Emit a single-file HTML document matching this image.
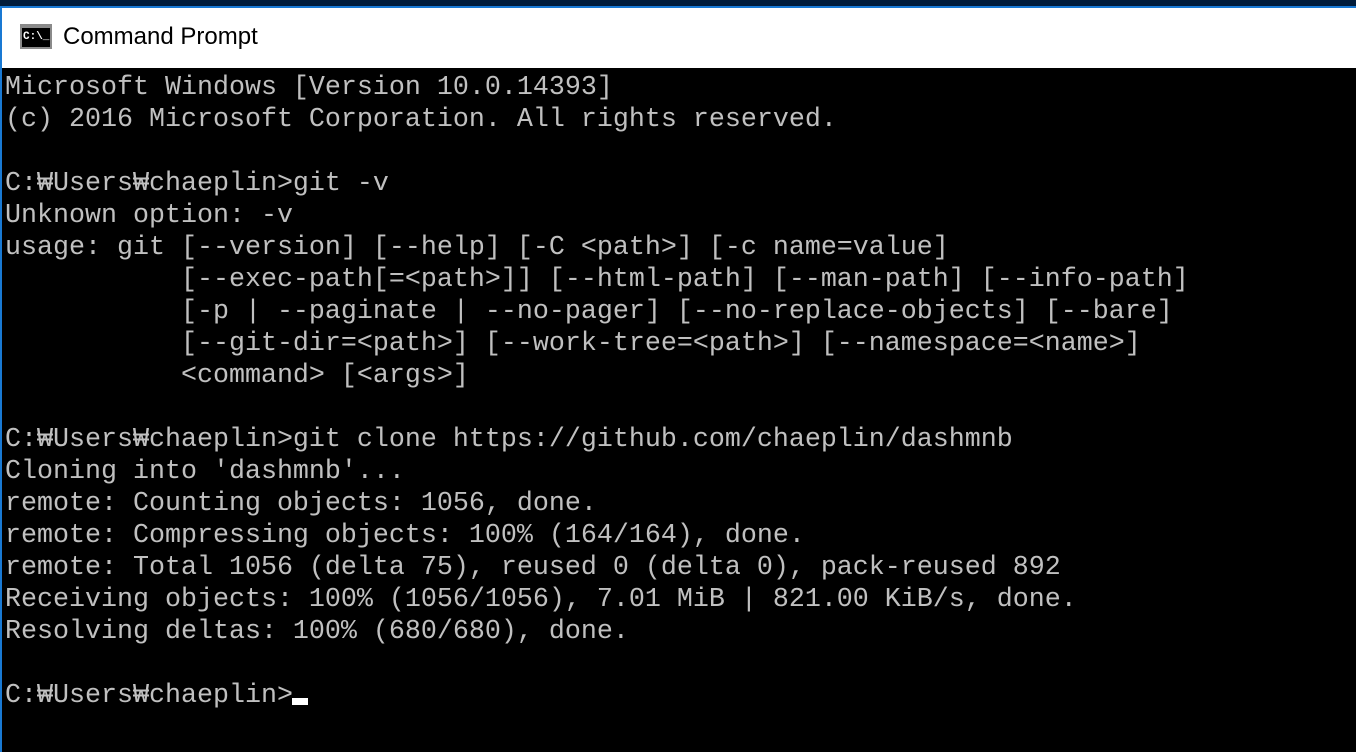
<!DOCTYPE html>
<html><head><meta charset="utf-8"><style>
html,body{margin:0;padding:0}
body{width:1356px;height:752px;position:relative;overflow:hidden;background:#000}
.top{position:absolute;left:0;top:0;width:1356px;height:6px;background:#011c3a}
.blue{position:absolute;left:0;top:6px;width:1356px;height:2px;background:#1979d3}
.lb{position:absolute;left:0;top:6px;width:2px;height:746px;background:#1979d3}
.title{position:absolute;left:2px;top:8px;width:1354px;height:60px;background:#fff}
.ttext{position:absolute;left:63px;top:23px;font:24px "Liberation Sans",sans-serif;color:#000}
.icon{position:absolute;left:20px;top:24px;width:32px;height:25px;background:#8a8a8a}
.icon .in{position:absolute;left:2px;top:4px;width:28px;height:19px;background:#000;color:#fff;font:bold 11px "Liberation Mono",monospace;line-height:19px;text-indent:1px}
pre{position:absolute;left:5px;top:72px;margin:0;font-family:"Liberation Mono",monospace;font-size:26.67px;line-height:32px;color:#c0c0c0}
.cur{position:absolute;left:292px;top:698px;width:16px;height:7px;background:#fff}
</style></head><body>
<div class="top"></div><div class="blue"></div>
<div class="title"></div>
<div class="icon"><div class="in">C:\_</div></div>
<div class="ttext">Command Prompt</div>
<div class="lb"></div>
<pre>Microsoft Windows [Version 10.0.14393]
(c) 2016 Microsoft Corporation. All rights reserved.

C:₩Users₩chaeplin>git -v
Unknown option: -v
usage: git [--version] [--help] [-C &lt;path&gt;] [-c name=value]
           [--exec-path[=&lt;path&gt;]] [--html-path] [--man-path] [--info-path]
           [-p | --paginate | --no-pager] [--no-replace-objects] [--bare]
           [--git-dir=&lt;path&gt;] [--work-tree=&lt;path&gt;] [--namespace=&lt;name&gt;]
           &lt;command&gt; [&lt;args&gt;]

C:₩Users₩chaeplin>git clone https://github.com/chaeplin/dashmnb
Cloning into 'dashmnb'...
remote: Counting objects: 1056, done.
remote: Compressing objects: 100% (164/164), done.
remote: Total 1056 (delta 75), reused 0 (delta 0), pack-reused 892
Receiving objects: 100% (1056/1056), 7.01 MiB | 821.00 KiB/s, done.
Resolving deltas: 100% (680/680), done.

C:₩Users₩chaeplin></pre>
<div class="cur"></div>
</body></html>
